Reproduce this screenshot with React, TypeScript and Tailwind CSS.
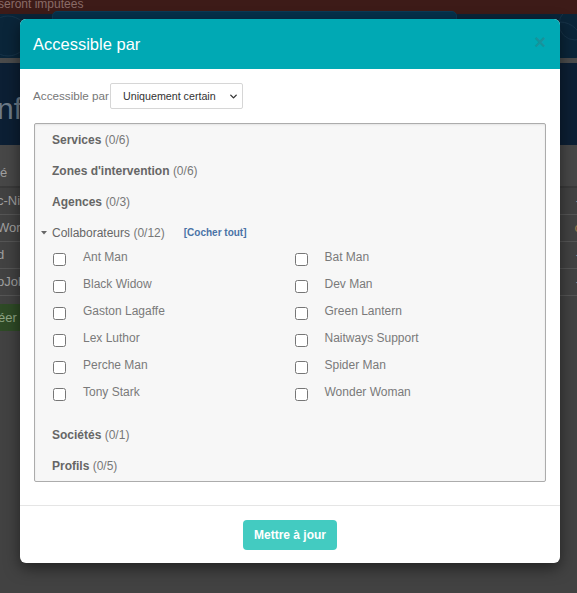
import { ChevronDown } from "lucide-react";

const left = ["Ant Man", "Black Widow", "Gaston Lagaffe", "Lex Luthor", "Perche Man", "Tony Stark"];
const right = ["Bat Man", "Dev Man", "Green Lantern", "Naitways Support", "Spider Man", "Wonder Woman"];

const rows = [
  { l: "c-Nic", r: "-" },
  { l: "Worl", r: "c" },
  { l: "d", r: "-" },
  { l: "oJob", r: "-" },
];

function Section({ label, count }: { label: string; count: string }) {
  return (
    <div className="h-[31px] flex items-center pl-[17px] text-[12px] leading-[14px]">
      <span className="font-bold text-[#666]">{label}</span>
      <span className="text-[#777]">&nbsp;{count}</span>
    </div>
  );
}

function Item({ name }: { name: string }) {
  return (
    <div className="h-[27px] flex items-start pt-[2px]">
      <input type="checkbox" className="m-0 mt-[3px] w-[13px] h-[13px] shrink-0 accent-[#888]" />
      <span className="ml-[17px] text-[12px] leading-[14px] text-[#7a7a7a]">{name}</span>
    </div>
  );
}

export default function App() {
  return (
    <div className="relative w-[577px] h-[593px] overflow-hidden bg-[#424242] font-['Liberation_Sans',Arial,sans-serif]">
      {/* dimmed page behind */}
      <div className="h-[14px] bg-[#3d1b18] text-[12px] leading-[9px] text-[#8a6b67] -ml-[2px] whitespace-nowrap">
        seront imputees
      </div>
      <div className="relative h-[44px] bg-[#0a2539] overflow-hidden">
        <svg className="absolute left-0 top-0" width="577" height="44" fill="none" stroke="#173348" strokeWidth="1">
          <circle cx="8" cy="22" r="20" />
          <circle cx="560" cy="30" r="22" />
          <circle cx="575" cy="10" r="16" />
        </svg>
      </div>
      <div className="h-[5px] bg-[#4b4b4b]" />
      <div className="h-[82px] bg-[#0c1f34] flex items-center pt-[10px] overflow-hidden">
        <span className="-ml-[3px] text-[30px] text-[#6c7a88] leading-none">nfig</span>
      </div>
      <div className="bg-[#474747] h-[43px] flex items-end justify-between pb-[4px] text-[13px] text-[#a0a0a0] border-b-2 border-[#3a3a3a]">
        <span>é</span>
        <span className="-mr-[4px]">/</span>
      </div>
      {rows.map((r) => (
        <div key={r.l} className="h-[27px] flex items-center justify-between text-[13px] text-[#a0a0a0] border-b border-[#555]">
          <span className="-ml-[3px]">{r.l}</span>
          <span className={r.r === "c" ? "-mr-[4px] text-[#9a7a4a]" : "-mr-[3px]"}>{r.r}</span>
        </div>
      ))}
      <div className="mt-[8px] h-[27px] w-[60px] bg-[#2e4a26] flex items-center text-[13px] text-[#8fa585]">
        <span className="-ml-[2px]">éer</span>
      </div>

      {/* other dialog behind */}
      <div className="absolute left-[52px] top-[11px] w-[405px] h-[60px] bg-[#05314b] rounded-t-[5px] border border-[#0a3a56]" />

      {/* modal */}
      <div className="absolute left-[20px] top-[19px] w-[540px] bg-white rounded-[6px] shadow-[0_5px_15px_rgba(0,0,0,0.5)]">
        <div className="h-[50px] bg-[#00a9b4] rounded-t-[6px] flex items-center justify-between pl-[13px] pr-[14px]">
          <span className="text-[16.5px] text-white">Accessible par</span>
          <span className="text-[20px] font-bold leading-none text-[#18939b] -mt-[4px]">×</span>
        </div>

        <div className="px-[14px] pt-[14px] pb-[23px]">
          <div className="flex items-center">
            <span className="-ml-[1px] text-[11.7px] text-[#777] leading-[14px]">Accessible par</span>
            <div className="relative ml-[1px]">
              <select className="appearance-none w-[133px] h-[26px] border border-[#d6d6d6] rounded-[2px] bg-white pl-[12px] text-[10.7px] text-[#333] outline-none">
                <option>Uniquement certain</option>
              </select>
              <ChevronDown className="absolute right-[4px] top-[8px] w-[11px] h-[11px] text-[#333] pointer-events-none" strokeWidth={3} />
            </div>
          </div>

          <div className="mt-[14px] bg-[#f7f7f7] border border-[#acacac] rounded-[2px] shadow-[inset_0_1px_2px_rgba(0,0,0,0.08)]">
            <Section label="Services" count="(0/6)" />
            <Section label="Zones d'intervention" count="(0/6)" />
            <Section label="Agences" count="(0/3)" />
            <div className="h-[31px] flex items-center pl-[6px] text-[12px] leading-[14px]">
              <svg width="6" height="4" viewBox="0 0 6 4" className="mr-[5px]">
                <path d="M0 0h6L3 3.5z" fill="#666" />
              </svg>
              <span className="text-[#666]">Collaborateurs</span>
              <span className="text-[#777]">&nbsp;(0/12)</span>
              <span className="ml-[19px] text-[10px] font-bold text-[#4a73a6]">[Cocher tout]</span>
            </div>
            <div className="grid grid-cols-2 pl-[18px] pr-[9px] mb-[9px]">
              {left.map((n, i) => (
                <div key={n} className="contents">
                  <Item name={n} />
                  <Item name={right[i]} />
                </div>
              ))}
            </div>
            <Section label="Sociétés" count="(0/1)" />
            <Section label="Profils" count="(0/5)" />
          </div>
        </div>

        <div className="border-t border-[#e5e5e5] pt-[14px] pb-[13px] flex justify-center">
          <button className="h-[30px] w-[94px] rounded-[4px] bg-[#43cbc1] text-white text-[12px] font-bold">
            Mettre à jour
          </button>
        </div>
      </div>
    </div>
  );
}
